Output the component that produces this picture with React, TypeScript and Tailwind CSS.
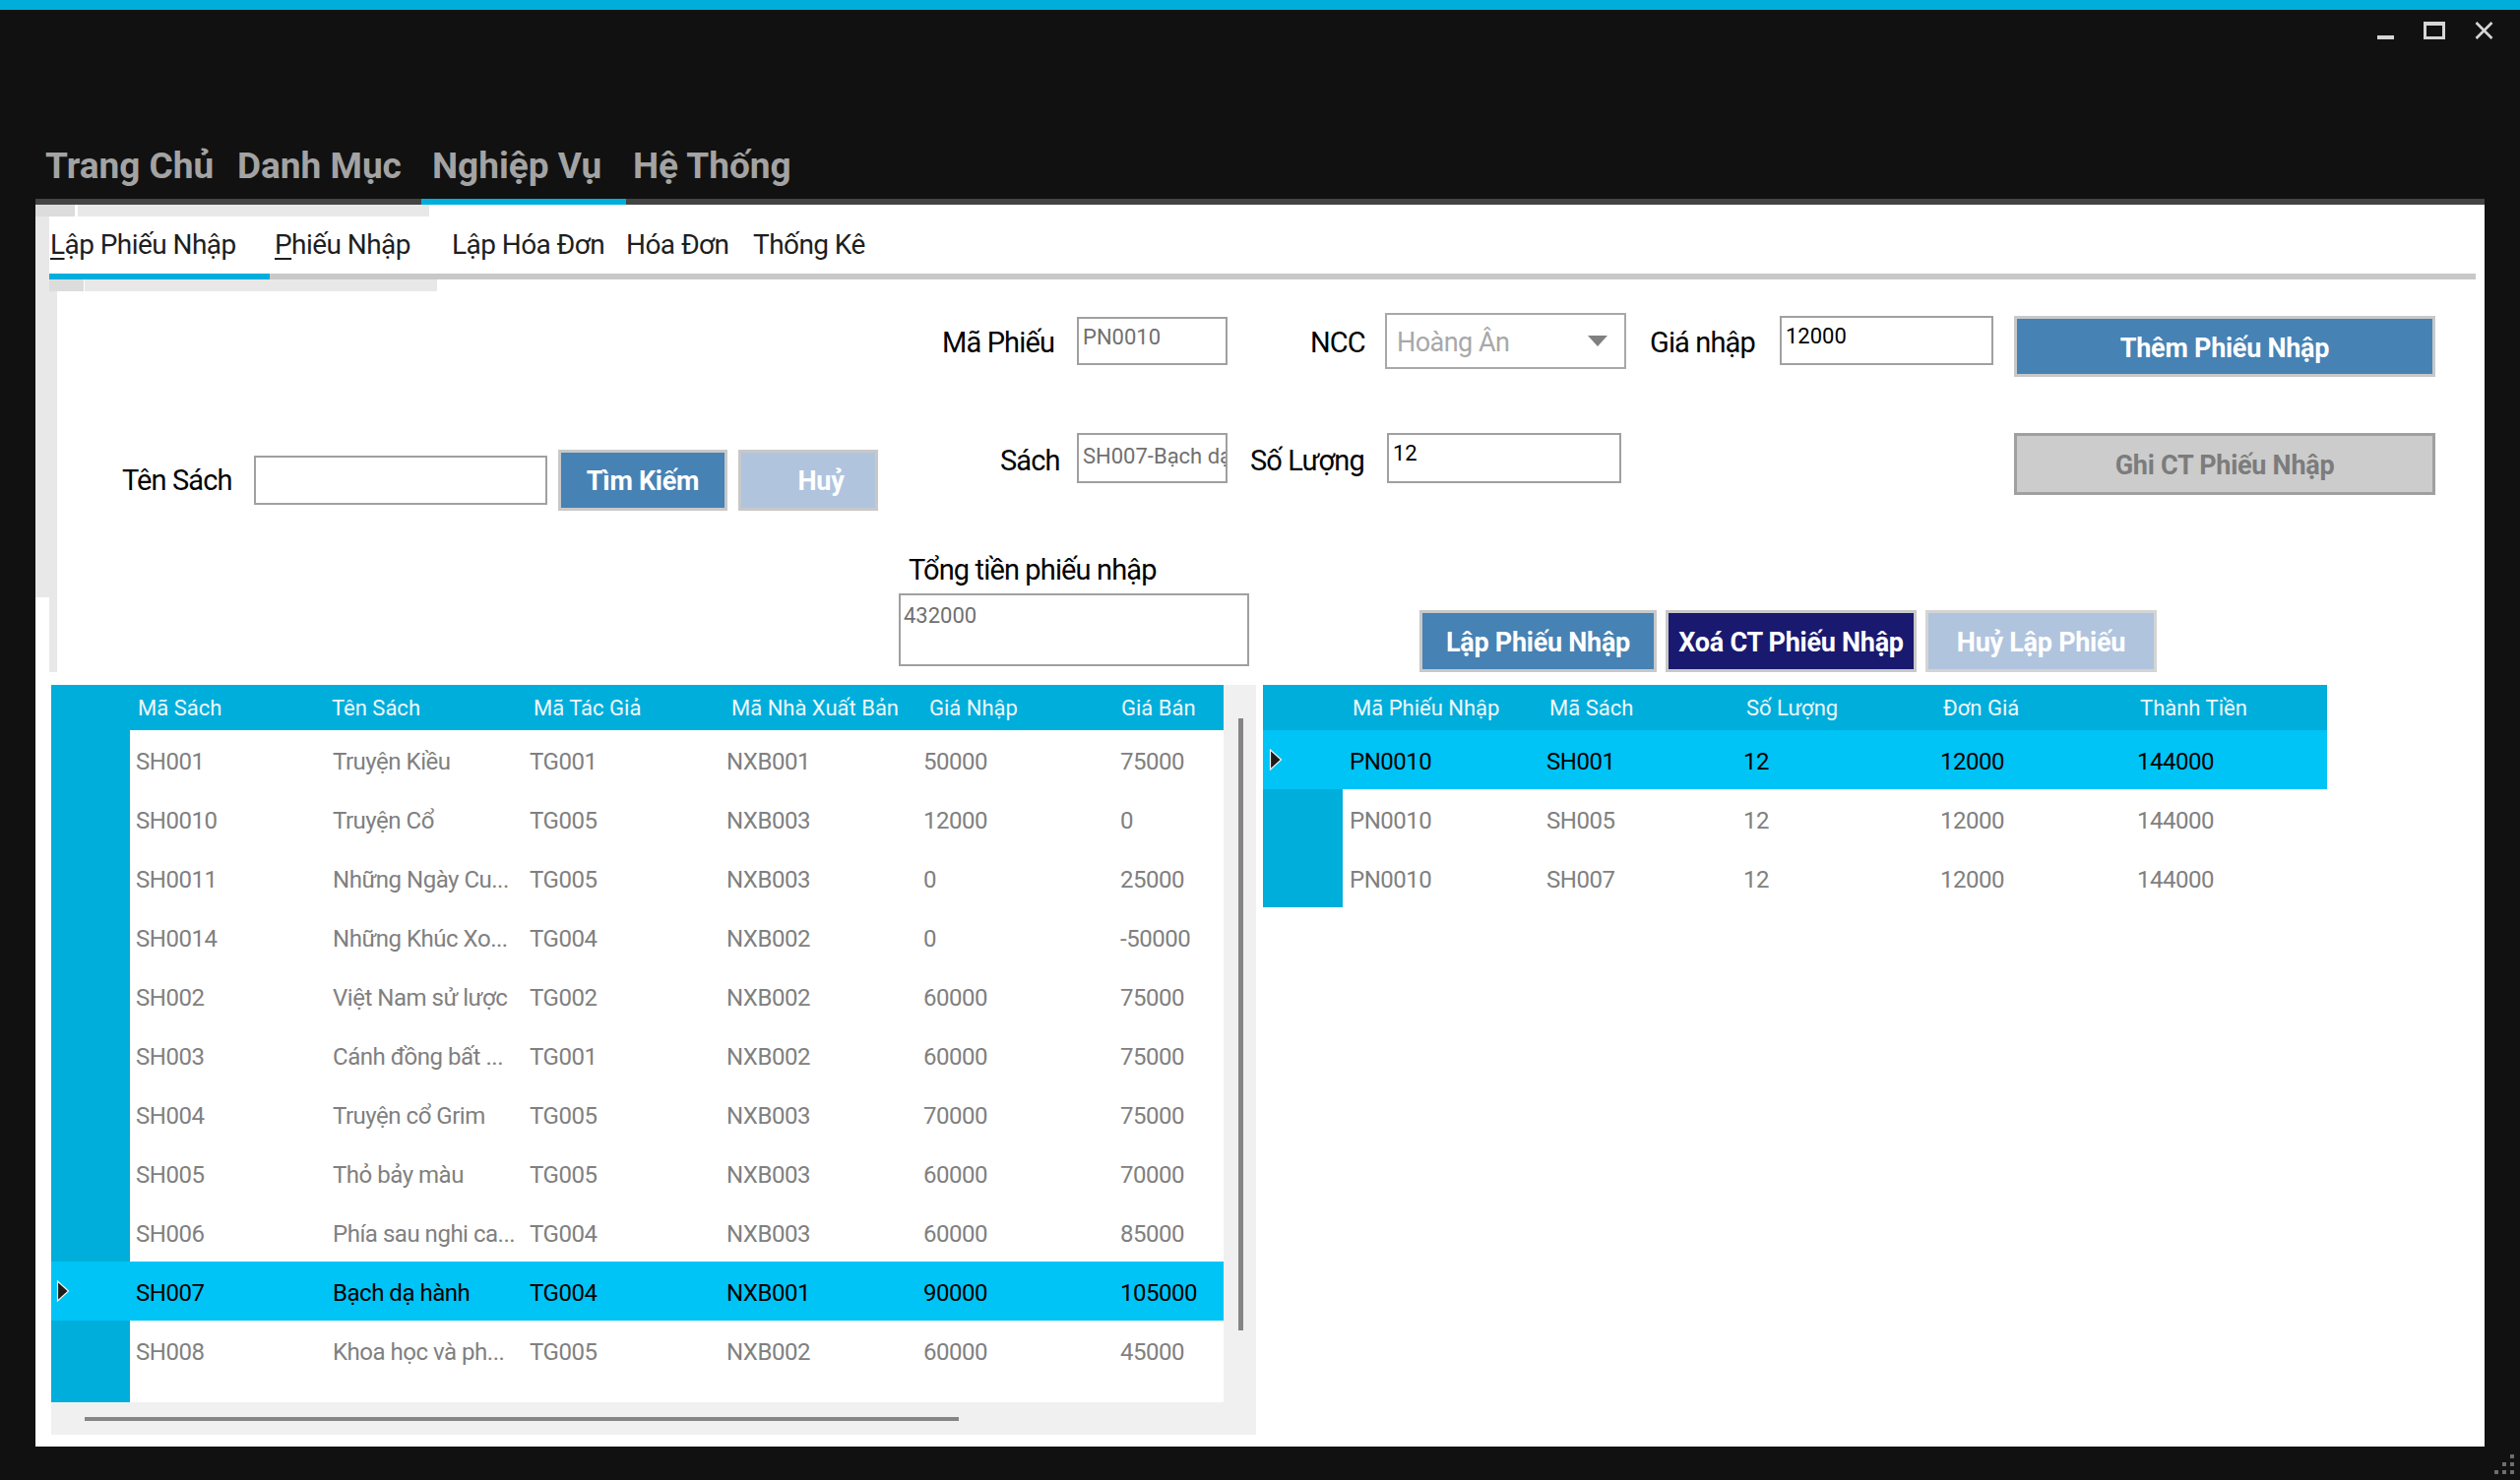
import React from "react";

const HEAD = "bg-[#00aedb]";
const SEL = "bg-[#00c4f6]";

const bookCols = ["Mã Sách", "Tên Sách", "Mã Tác Giả", "Mã Nhà Xuất Bản", "Giá Nhập", "Giá Bán"];
const bookHeadPad = ["pl-[8px]", "pl-[5px]", "pl-[10px]", "pl-[11px]", "pl-[12px]", "pl-[7px]"];
const books = [
  ["SH001", "Truyện Kiều", "TG001", "NXB001", "50000", "75000"],
  ["SH0010", "Truyện Cổ", "TG005", "NXB003", "12000", "0"],
  ["SH0011", "Những Ngày Cu...", "TG005", "NXB003", "0", "25000"],
  ["SH0014", "Những Khúc Xo...", "TG004", "NXB002", "0", "-50000"],
  ["SH002", "Việt Nam sử lược", "TG002", "NXB002", "60000", "75000"],
  ["SH003", "Cánh đồng bất ...", "TG001", "NXB002", "60000", "75000"],
  ["SH004", "Truyện cổ Grim", "TG005", "NXB003", "70000", "75000"],
  ["SH005", "Thỏ bảy màu", "TG005", "NXB003", "60000", "70000"],
  ["SH006", "Phía sau nghi ca...", "TG004", "NXB003", "60000", "85000"],
  ["SH007", "Bạch dạ hành", "TG004", "NXB001", "90000", "105000"],
  ["SH008", "Khoa học và ph...", "TG005", "NXB002", "60000", "45000"],
];

const detailCols = ["Mã Phiếu Nhập", "Mã Sách", "Số Lượng", "Đơn Giá", "Thành Tiền"];
const details = [
  ["PN0010", "SH001", "12", "12000", "144000"],
  ["PN0010", "SH005", "12", "12000", "144000"],
  ["PN0010", "SH007", "12", "12000", "144000"],
];

const label = "text-[29px] leading-[34px] tracking-[-0.03em] text-black whitespace-nowrap";
const input =
  "border-2 border-[#a0a0a0] bg-white pl-[4px] pt-[6px] text-[22px] leading-[26px] whitespace-nowrap overflow-hidden";
const btnBase =
  "border-[3px] flex items-center justify-center text-[27px] font-bold tracking-[-0.01em] whitespace-nowrap";
const btn = `${btnBase} text-white`;

function Arrow() {
  return (
    <svg width="14" height="22" viewBox="0 0 14 22">
      <polygon points="1.5,1 12.5,11 1.5,21" fill="#1c1c1c" stroke="#f4f4f4" strokeWidth="1.2" />
    </svg>
  );
}

function BookGrid() {
  return (
    <div className="w-[1224px] h-[762px] bg-[#f0f0f0] flex flex-col shrink-0">
      <div className="flex h-[729px]">
        <div className="w-[1191px] h-full bg-white overflow-hidden flex flex-col">
          <div className={`flex h-[46px] shrink-0 ${HEAD} text-[22px] text-[#eef8fb]`}>
            <div className="w-[80px] shrink-0" />
            {bookCols.map((c, i) => (
              <div key={c} className={`w-[200px] shrink-0 flex items-center whitespace-nowrap ${bookHeadPad[i]}`}>
                {c}
              </div>
            ))}
          </div>
          {books.map((r) => {
            const sel = r[0] === "SH007";
            return (
              <div
                key={r[0]}
                className={`flex h-[60px] shrink-0 text-[24px] tracking-[-0.02em] ${sel ? `${SEL} text-black` : "bg-white text-[#808080]"}`}
              >
                <div className={`w-[80px] shrink-0 flex items-center pl-[5px] ${sel ? SEL : HEAD}`}>
                  {sel && <Arrow />}
                </div>
                {r.map((c, i) => (
                  <div key={i} className="w-[200px] shrink-0 flex items-center pl-[6px] pt-[4px] whitespace-nowrap overflow-hidden">
                    {c}
                  </div>
                ))}
              </div>
            );
          })}
          <div className="flex flex-1">
            <div className={`w-[80px] ${HEAD}`} />
          </div>
        </div>
        <div className="w-[33px] h-full">
          <div className="ml-[15px] mt-[34px] w-[5px] h-[622px] bg-[#858585]" />
        </div>
      </div>
      <div className="h-[33px]">
        <div className="ml-[34px] mt-[15px] w-[888px] h-[4px] bg-[#858585]" />
      </div>
    </div>
  );
}

function DetailGrid() {
  return (
    <div className="ml-[7px] w-[1081px] flex flex-col shrink-0">
      <div className={`flex h-[46px] ${HEAD} text-[22px] text-[#eef8fb]`}>
        <div className="w-[81px] shrink-0" />
        {detailCols.map((c) => (
          <div key={c} className="w-[200px] shrink-0 flex items-center pl-[10px] whitespace-nowrap">
            {c}
          </div>
        ))}
      </div>
      {details.map((r, idx) => {
        const sel = idx === 0;
        return (
          <div
            key={r[1]}
            className={`flex h-[60px] text-[24px] tracking-[-0.02em] ${sel ? `${SEL} text-black` : "bg-white text-[#808080]"}`}
          >
            <div className={`w-[81px] shrink-0 flex items-center pl-[6px] ${sel ? SEL : HEAD}`}>
              {sel && <Arrow />}
            </div>
            {r.map((c, i) => (
              <div key={i} className="w-[200px] shrink-0 flex items-center pl-[7px] pt-[4px] whitespace-nowrap">
                {c}
              </div>
            ))}
          </div>
        );
      })}
    </div>
  );
}

function TabLabel({ first, rest }: { first: string; rest: string }) {
  return (
    <>
      <span className="underline underline-offset-[4px]">{first}</span>
      {rest}
    </>
  );
}

export default function App() {
  const subTabs = [
    { w: "w-[224px]", pl: "pl-[1px]", sel: true, node: <TabLabel first="L" rest="ập Phiếu Nhập" /> },
    { w: "w-[180px]", pl: "pl-[5px]", sel: false, node: <TabLabel first="P" rest="hiếu Nhập" /> },
    { w: "w-[176px]", pl: "pl-[5px]", sel: false, node: "Lập Hóa Đơn" },
    { w: "w-[130px]", pl: "pl-[6px]", sel: false, node: "Hóa Đơn" },
    { w: "w-[120px]", pl: "pl-[5px]", sel: false, node: "Thống Kê" },
  ];

  const menu = [
    { t: "Trang Chủ", w: "w-[194px]", pl: "pl-[10px]", sel: false },
    { t: "Danh Mục", w: "w-[198px]", pl: "pl-[11px]", sel: false },
    { t: "Nghiệp Vụ", w: "w-[208px]", pl: "pl-[11px]", sel: true },
    { t: "Hệ Thống", w: "w-[190px]", pl: "pl-[7px]", sel: false },
  ];

  return (
    <div className="w-[2560px] h-[1504px] bg-[#111111] overflow-hidden flex flex-col font-['Roboto',sans-serif]">
      {/* title strip */}
      <div className="h-[10px] bg-[#00aedb] shrink-0" />
      <div className="h-[40px] flex justify-end items-start shrink-0">
        <div className="mt-[26px] w-[17px] h-[4px] bg-[#d6d6d6]" />
        <div className="ml-[30px] mt-[12px] w-[22px] h-[18px] border-[3px] border-t-[4px] border-[#d6d6d6]" />
        <svg className="ml-[30px] mt-[12px] mr-[27px]" width="19" height="18" viewBox="0 0 19 18">
          <path d="M1.5 1 L17.5 17 M17.5 1 L1.5 17" stroke="#d6d6d6" strokeWidth="2.6" />
        </svg>
      </div>

      {/* main menu */}
      <div className="mt-[100px] px-[36px] flex shrink-0">
        {menu.map((m) => (
          <div
            key={m.t}
            className={`${m.w} ${m.pl} shrink-0 pb-[15px] border-b-[6px] ${m.sel ? "border-[#00aedb]" : "border-[#444444]"} text-[37px] leading-[37px] font-bold text-[#a3a3a3] whitespace-nowrap`}
          >
            {m.t}
          </div>
        ))}
        <div className="flex-1 border-b-[6px] border-[#444444]" />
      </div>

      {/* content panel */}
      <div className="mx-[36px] h-[1262px] bg-white flex flex-col shrink-0">
        <div className="h-[12px] flex shrink-0">
          <div className="w-[40px] bg-[#dcdcdc]" />
          <div className="w-[3px]" />
          <div className="w-[357px] bg-[#e8e8e8]" />
        </div>

        {/* sub tabs */}
        <div className="h-[64px] flex shrink-0">
          <div className="w-[14px] bg-[#e8e8e8]" />
          {subTabs.map((t, i) => (
            <div
              key={i}
              className={`${t.w} ${t.pl} shrink-0 pt-[12px] border-b-[6px] ${t.sel ? "border-[#00aedb]" : "border-[#c8c8c8]"} text-[28px] leading-[34px] tracking-[-0.02em] text-[#1e1e1e] whitespace-nowrap`}
            >
              {t.node}
            </div>
          ))}
          <div className="flex-1 mr-[9px] border-b-[6px] border-[#c8c8c8]" />
        </div>

        <div className="h-[12px] flex shrink-0">
          <div className="w-[14px] bg-[#e8e8e8]" />
          <div className="w-[35px] bg-[#dcdcdc]" />
          <div className="w-[1px]" />
          <div className="w-[358px] bg-[#e8e8e8]" />
        </div>

        {/* form */}
        <div className="h-[387px] flex shrink-0">
          <div className="w-[14px] flex flex-col">
            <div className="h-[311px] bg-[#e8e8e8]" />
          </div>
          <div className="w-[8px] bg-[#e8e8e8]" />
          <div className="flex-1 flex flex-col">
            {/* row 1 */}
            <div className="h-[140px] flex items-start">
              <div className={`ml-[899px] w-[137px] mt-[35px] ${label}`}>Mã Phiếu</div>
              <div className={`w-[153px] h-[49px] mt-[26px] text-[#707070] ${input}`}>PN0010</div>
              <div className={`ml-[84px] w-[76px] mt-[35px] ${label}`}>NCC</div>
              <div className="w-[245px] h-[57px] mt-[22px] border-2 border-[#a8a8a8] bg-white flex items-center justify-between pl-[10px] pr-[17px]">
                <span className="mt-[3px] text-[27px] tracking-[-0.02em] text-[#a8a8a8] whitespace-nowrap">Hoàng Ân</span>
                <svg width="20" height="11" viewBox="0 0 20 11">
                  <polygon points="0,0 20,0 10,11" fill="#808080" />
                </svg>
              </div>
              <div className={`ml-[24px] w-[132px] mt-[35px] ${label}`}>Giá nhập</div>
              <div className={`w-[217px] h-[50px] mt-[25px] text-black ${input}`}>12000</div>
              <div className={`ml-[21px] w-[428px] h-[62px] mt-[25px] pt-[4px] bg-[#4682b4] border-[#c8c8c8] ${btn}`}>
                Thêm Phiếu Nhập
              </div>
            </div>

            {/* row 2 */}
            <div className="h-[120px] flex items-start">
              <div className={`ml-[66px] w-[134px] mt-[35px] ${label}`}>Tên Sách</div>
              <div className={`w-[298px] h-[50px] mt-[27px] ${input}`} />
              <div className={`ml-[11px] w-[172px] h-[62px] mt-[21px] pt-[2px] bg-[#4682b4] border-[#c8c8c8] ${btn}`}>
                Tìm Kiếm
              </div>
              <div className={`ml-[11px] w-[142px] h-[62px] mt-[21px] pl-[26px] pt-[2px] bg-[#b0c4de] border-[#c8c8c8] ${btn}`}>
                Huỷ
              </div>
              <div className={`ml-[124px] w-[78px] mt-[15px] ${label}`}>Sách</div>
              <input
                readOnly
                value="SH007-Bạch dạ hành"
                className={`w-[153px] h-[51px] mt-[4px] pb-[10px] text-[#707070] outline-none ${input}`}
              />
              <div className={`ml-[23px] w-[139px] mt-[15px] ${label}`}>Số Lượng</div>
              <div className={`w-[238px] h-[51px] mt-[4px] text-black ${input}`}>12</div>
              <div
                className={`ml-[399px] w-[428px] h-[63px] mt-[4px] pt-[4px] bg-[#cccccc] border-[#a0a0a0] text-[#7c7c7c] ${btnBase}`}
              >
                Ghi CT Phiếu Nhập
              </div>
            </div>

            {/* row 3 */}
            <div className="h-[127px] flex items-start">
              <div className="ml-[855px] flex flex-col">
                <div className={`pl-[10px] mt-[6px] ${label}`}>Tổng tiền phiếu nhập</div>
                <div className="mt-[7px] w-[356px] h-[74px] border-2 border-[#a0a0a0] pl-[3px] pt-[8px] text-[22px] leading-[26px] text-[#707070]">
                  432000
                </div>
              </div>
              <div className={`ml-[173px] w-[241px] h-[63px] mt-[64px] pt-[4px] bg-[#4682b4] border-[#c8c8c8] ${btn}`}>
                Lập Phiếu Nhập
              </div>
              <div className={`ml-[9px] w-[255px] h-[63px] mt-[64px] pt-[4px] bg-[#191970] border-[#c8c8c8] ${btn}`}>
                Xoá CT Phiếu Nhập
              </div>
              <div className={`ml-[9px] w-[235px] h-[63px] mt-[64px] pt-[4px] bg-[#b0c4de] border-[#d4d4d4] ${btn}`}>
                Huỷ Lập Phiếu
              </div>
            </div>
          </div>
        </div>

        {/* grids */}
        <div className="mt-[13px] ml-[16px] flex items-start">
          <BookGrid />
          <DetailGrid />
        </div>
      </div>

      {/* resize grip */}
      <div className="flex-1 flex justify-end">
        <div className="mt-[8px] mr-[6px] grid grid-cols-3 gap-[4px] w-[20px] h-[20px]">
          <div />
          <div />
          <div className="bg-[#6e6e6e]" />
          <div />
          <div className="bg-[#6e6e6e]" />
          <div className="bg-[#6e6e6e]" />
          <div className="bg-[#6e6e6e]" />
          <div className="bg-[#6e6e6e]" />
          <div className="bg-[#6e6e6e]" />
        </div>
      </div>
    </div>
  );
}
